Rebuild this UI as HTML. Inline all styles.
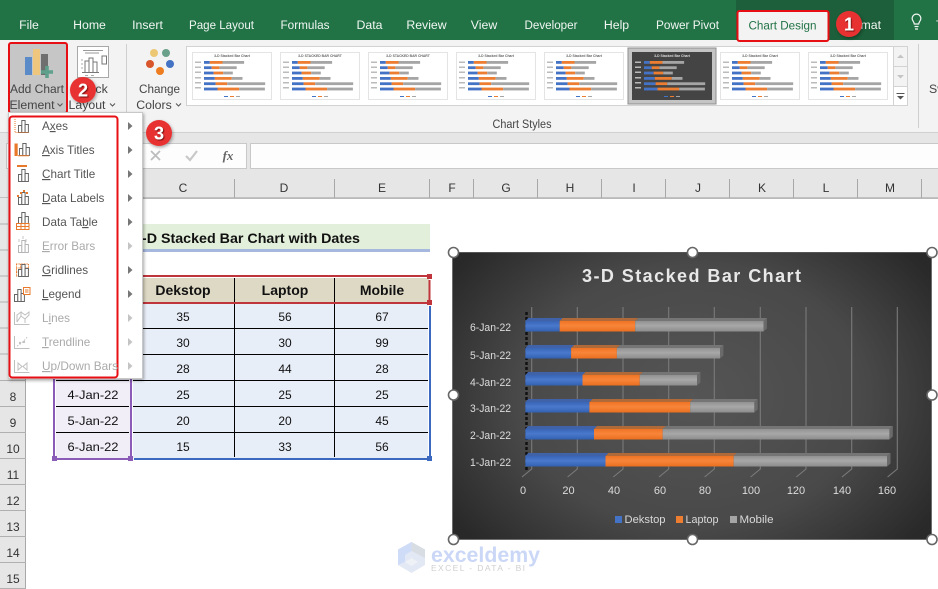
<!DOCTYPE html>
<html><head><meta charset="utf-8"><title>Add Chart Element</title>
<style>
html,body{margin:0;padding:0;background:#fff;overflow:hidden}
svg{display:block;font-family:"Liberation Sans",sans-serif}
.t{fill:#444;font-size:12px}
.tab{fill:#f1f6f3;font-size:12.3px;text-anchor:middle}
.rb{fill:#444;font-size:12.3px;text-anchor:middle}
.m{fill:#555;font-size:11.7px}
.d{fill:#aaa;font-size:11.7px}
.c{fill:#111;font-size:12px;text-anchor:middle}
.h{fill:#111;font-size:14px;font-weight:bold;text-anchor:middle}
.col{fill:#333;font-size:12px;text-anchor:middle}
.row{fill:#333;font-size:12px;text-anchor:middle}
.cat{fill:#dcdcdc;font-size:11px;text-anchor:end}
.val{fill:#dcdcdc;font-size:11px;text-anchor:middle}
.leg{fill:#d9d9d9;font-size:11px}
.badge{fill:#fff;font-size:18px;font-weight:bold;text-anchor:middle;paint-order:normal}
.th{font-size:3.4px;font-weight:bold;fill:#666;text-anchor:middle}
</style></head><body>
<svg width="938" height="589" viewBox="0 0 938 589" xmlns="http://www.w3.org/2000/svg">
<defs>
<radialGradient id="bg" cx="692" cy="396" r="290" gradientUnits="userSpaceOnUse" gradientTransform="translate(0 99) scale(1 .75)">
<stop offset="0" stop-color="#555"/><stop offset=".6" stop-color="#494949"/><stop offset="1" stop-color="#292929"/></radialGradient>
<linearGradient id="fb" x1="0" y1="0" x2="0" y2="1"><stop offset="0" stop-color="#3865b5"/><stop offset=".45" stop-color="#4a78cc"/><stop offset="1" stop-color="#3361b2"/></linearGradient>
<linearGradient id="fo" x1="0" y1="0" x2="0" y2="1"><stop offset="0" stop-color="#ef7424"/><stop offset=".45" stop-color="#f8853a"/><stop offset="1" stop-color="#e96f20"/></linearGradient>
<linearGradient id="fg" x1="0" y1="0" x2="0" y2="1"><stop offset="0" stop-color="#929292"/><stop offset=".45" stop-color="#a8a8a8"/><stop offset="1" stop-color="#8c8c8c"/></linearGradient>
<filter id="sh" x="-30%" y="-30%" width="160%" height="160%"><feDropShadow dx="1" dy="1.5" stdDeviation="1.5" flood-color="#000" flood-opacity=".35"/></filter>
<filter id="ts" x="-30%" y="-30%" width="160%" height="160%"><feDropShadow dx="1" dy="1" stdDeviation=".4" flood-color="#5a0000" flood-opacity=".8"/></filter>
<g id="tb">
<g fill="#bbb"><rect x="3" y="9.5" width="6" height="1.5"/><rect x="3" y="14.5" width="6" height="1.5"/><rect x="3" y="19.5" width="6" height="1.5"/><rect x="3" y="25" width="6" height="1.5"/><rect x="3" y="30" width="6" height="1.5"/><rect x="3" y="35" width="6" height="1.5"/></g>
<g fill="#4472c4"><rect x="12" y="9" width="5.8" height="2.8"/><rect x="12" y="14.3" width="7.7" height="2.8"/><rect x="12" y="19.6" width="9.6" height="2.8"/><rect x="12" y="25" width="10.8" height="2.8"/><rect x="12" y="30.3" width="11.6" height="2.8"/><rect x="12" y="35.6" width="13.5" height="2.8"/></g>
<g fill="#ed7d31"><rect x="17.8" y="9" width="12.7" height="2.8"/><rect x="19.7" y="14.3" width="7.7" height="2.8"/><rect x="21.6" y="19.6" width="9.6" height="2.8"/><rect x="22.8" y="25" width="16.9" height="2.8"/><rect x="23.6" y="30.3" width="11.6" height="2.8"/><rect x="25.5" y="35.6" width="21.6" height="2.8"/></g>
<g fill="#a5a5a5"><rect x="30.5" y="9" width="21.6" height="2.8"/><rect x="27.4" y="14.3" width="17.3" height="2.8"/><rect x="31.2" y="19.6" width="9.6" height="2.8"/><rect x="39.7" y="25" width="10.8" height="2.8"/><rect x="35.2" y="30.3" width="38" height="2.8"/><rect x="47.1" y="35.6" width="25.8" height="2.8"/></g>
<rect x="32" y="44" width="4" height="1" fill="#4472c4"/><rect x="38" y="44" width="4" height="1" fill="#ed7d31"/><rect x="44" y="44" width="4" height="1" fill="#a5a5a5"/>
</g>
<g id="bars" fill="#fff" stroke="#666" stroke-width="1"><rect x="18.5" y="125.5" width="3.3" height="7"/><rect x="21.8" y="120.5" width="3.3" height="12"/><rect x="25.100" y="124.5" width="3.3" height="8"/></g>
<g id="barsL" fill="#fff" stroke="#b5b5b5" stroke-width="1"><rect x="18.5" y="125.5" width="3.3" height="7"/><rect x="21.8" y="120.5" width="3.3" height="12"/><rect x="25.100" y="124.5" width="3.3" height="8"/></g>
</defs>

<!-- base -->
<rect width="938" height="589" fill="#fff"/>
<rect width="938" height="40" fill="#217346"/>
<rect x="736" y="0" width="158" height="40" fill="#1d5f3a"/>
<rect y="40" width="938" height="92" fill="#f3f3f3"/>
<rect y="132" width="938" height="1" fill="#d0d0d0"/>
<rect y="133" width="938" height="65" fill="#e6e6e6"/>
<rect y="197.5" width="938" height="1.2" fill="#9c9c9c"/>

<!-- tabs -->
<text class="tab" x="29" y="29">File</text>
<text class="tab" x="89.500" y="29">Home</text>
<text class="tab" x="147.500" y="29">Insert</text>
<text class="tab" x="221.500" y="29" textLength="65" lengthAdjust="spacingAndGlyphs">Page Layout</text>
<text class="tab" x="305" y="29" textLength="49" lengthAdjust="spacingAndGlyphs">Formulas</text>
<text class="tab" x="369.500" y="29">Data</text>
<text class="tab" x="426.500" y="29">Review</text>
<text class="tab" x="484" y="29">View</text>
<text class="tab" x="551" y="29" textLength="53" lengthAdjust="spacingAndGlyphs">Developer</text>
<text class="tab" x="616.500" y="29">Help</text>
<text class="tab" x="687.500" y="29" textLength="63" lengthAdjust="spacingAndGlyphs">Power Pivot</text>
<text class="tab" x="881" y="29" style="text-anchor:end">Format</text>
<rect x="737.500" y="11" width="91" height="30" rx="2" fill="#f3f3f3" stroke="#e80f14" stroke-width="2"/>
<text class="tab" x="782.500" y="29.500" style="fill:#217346" textLength="68" lengthAdjust="spacingAndGlyphs">Chart Design</text>
<path d="M912.500 23a4.300 4.300 0 1 1 8 0c-.6 1.300-1.600 2.200-1.800 4h-4.400c-.2-1.800-1.200-2.700-1.800-4zM914.500 29.500h4M915 32h3" transform="translate(0 -3)" fill="none" stroke="#f1f6f3" stroke-width="1.200"/>
<text class="tab" x="936" y="29" style="text-anchor:start">T</text>

<!-- ribbon: add chart -->
<rect x="9" y="43" width="58" height="70" rx="2" fill="#c6c6c6" stroke="#e80f14" stroke-width="2"/>
<rect x="25" y="57" width="7" height="18" fill="#5b8ac9"/>
<rect x="33" y="49" width="7" height="26" fill="#eec67e"/>
<rect x="41" y="54" width="7" height="21" fill="#6f6f6f"/>
<path d="M47 66v12M41 72h12" stroke="#5fa08c" stroke-width="3.600"/>
<text class="rb" x="37" y="93" textLength="54" lengthAdjust="spacingAndGlyphs">Add Chart</text>
<text class="rb" x="32" y="109">Element</text>
<path d="M57.500 103.500l2.500 2.500 2.500-2.500" fill="none" stroke="#555"/>

<!-- quick layout -->
<rect x="77.500" y="46.500" width="31" height="31" fill="#fff" stroke="#a8a8a8"/>
<path d="M83 50.500h20M85 53h14" stroke="#9a9a9a"/>
<path d="M85 72.500V61h4v11.500M89 72.500V58h4v14.500M93 72.500V62h4v10.500M82 72.500h17" fill="none" stroke="#777"/>
<rect x="102" y="56" width="4.500" height="8" fill="#fff" stroke="#777"/>
<path d="M81 60h2M81 64h2M81 68h2M85 75.500h3M91 75.500h3" stroke="#aaa"/>
<text class="rb" x="92" y="93">Quick</text>
<text class="rb" x="87" y="109">Layout</text>
<path d="M110 103.500l2.500 2.500 2.500-2.500" fill="none" stroke="#555"/>
<rect x="126" y="44" width="1" height="84" fill="#cfcfcf"/>

<!-- change colors -->
<circle cx="154" cy="53" r="4" fill="#edc874"/>
<circle cx="166" cy="53" r="4" fill="#6ba08a"/>
<circle cx="150" cy="64" r="4" fill="#d9552b"/>
<circle cx="170" cy="64" r="4" fill="#4472c4"/>
<circle cx="160" cy="71" r="4" fill="#ee7d22"/>
<text class="rb" x="159.500" y="93" textLength="41" lengthAdjust="spacingAndGlyphs">Change</text>
<text class="rb" x="154" y="109">Colors</text>
<path d="M176 103.500l2.500 2.500 2.500-2.500" fill="none" stroke="#555"/>

<!-- gallery -->
<rect x="186.500" y="46.500" width="721" height="59" fill="#fff" stroke="#d2d2d2"/>
<g fill="#fff" stroke="#e4e4e4">
<rect x="192.500" y="52.500" width="79" height="47"/><rect x="280.500" y="52.500" width="79" height="47"/><rect x="368.500" y="52.500" width="79" height="47"/><rect x="456.500" y="52.500" width="79" height="47"/><rect x="544.500" y="52.500" width="79" height="47"/><rect x="720.500" y="52.500" width="79" height="47"/><rect x="808.500" y="52.500" width="79" height="47"/>
</g>
<rect x="628" y="48" width="88" height="56" fill="#c4c4c4" stroke="#8e8e8e"/>
<rect x="632" y="52" width="80" height="48" fill="#444"/>
<use href="#tb" x="192" y="52"/><use href="#tb" x="280" y="52"/><use href="#tb" x="368" y="52"/><use href="#tb" x="456" y="52"/><use href="#tb" x="544" y="52"/><use href="#tb" x="632" y="52"/><use href="#tb" x="720" y="52"/><use href="#tb" x="808" y="52"/>
<text class="th" x="232" y="57">3-D Stacked Bar Chart</text>
<text class="th" x="320" y="57">3-D STACKED BAR CHART</text>
<text class="th" x="408" y="57">3-D STACKED BAR CHART</text>
<text class="th" x="496" y="57">3-D Stacked Bar Chart</text>
<text class="th" x="584" y="57">3-D Stacked Bar Chart</text>
<text class="th" x="672" y="57" style="fill:#ddd">3-D Stacked Bar Chart</text>
<text class="th" x="760" y="57">3-D Stacked Bar Chart</text>
<text class="th" x="848" y="57">3-D Stacked Bar Chart</text>
<rect x="893.500" y="46.500" width="14" height="59" fill="#f3f3f3" stroke="#d2d2d2"/>
<rect x="893.500" y="86.500" width="14" height="19" fill="#fff" stroke="#d2d2d2"/>
<path d="M893.500 66.500h14" stroke="#d2d2d2"/>
<path d="M897 58l3.500-3.500 3.500 3.500zM897 75l3.500 3.500 3.500-3.500z" fill="#c4c4c4"/>
<path d="M896.500 93.500h8" stroke="#555"/><path d="M897 96l3.500 3.500 3.500-3.500z" fill="#555"/>
<text class="rb" x="522" y="128" textLength="59" lengthAdjust="spacingAndGlyphs">Chart Styles</text>
<rect x="918" y="44" width="1" height="84" fill="#cfcfcf"/>
<text class="rb" x="929" y="93" style="text-anchor:start">Sw</text>

<!-- formula bar -->
<rect x="6.500" y="143.500" width="240" height="25" fill="#fdfdfd" stroke="#c8c8c8"/>
<rect x="250.500" y="143.500" width="700" height="25" fill="#fdfdfd" stroke="#c8c8c8"/>
<path d="M151 151l9 9M160 151l-9 9" stroke="#bdbdbd" stroke-width="1.800"/>
<path d="M186 156l4 4 7-9" fill="none" stroke="#c8c8c8" stroke-width="2.200"/>
<text x="228" y="160" text-anchor="middle" style="font-family:'Liberation Serif',serif;font-style:italic;font-weight:bold;font-size:13px;fill:#666">fx</text>

<!-- col headers -->
<g stroke="#a8a8a8"><path d="M234.500 179v19M334.500 179v19M429.500 179v19M473.500 179v19M537.500 179v19M601.500 179v19M665.500 179v19M729.500 179v19M793.500 179v19M857.500 179v19M921.500 179v19"/></g>
<text class="col" x="183" y="192">C</text><text class="col" x="284" y="192">D</text><text class="col" x="382" y="192">E</text><text class="col" x="452" y="192">F</text><text class="col" x="506" y="192">G</text><text class="col" x="570" y="192">H</text><text class="col" x="634" y="192">I</text><text class="col" x="698" y="192">J</text><text class="col" x="762" y="192">K</text><text class="col" x="826" y="192">L</text><text class="col" x="890" y="192">M</text>

<!-- row headers -->
<rect x="0" y="198" width="26" height="391" fill="#e6e6e6"/>
<path d="M25.500 198v391" stroke="#a8a8a8"/>
<g stroke="#b0b0b0"><path d="M0 224h26M0 250h26M0 276h26M0 302h26M0 328h26M0 354h26M0 380.500h26M0 406.500h26M0 432.500h26M0 458.500h26M0 484.500h26M0 510.500h26M0 536.500h26M0 562.500h26M0 588.500h26"/></g>
<text class="row" x="13" y="401">8</text><text class="row" x="13" y="427">9</text><text class="row" x="13" y="453">10</text><text class="row" x="13" y="479">11</text><text class="row" x="13" y="505">12</text><text class="row" x="13" y="531">13</text><text class="row" x="13" y="557">14</text><text class="row" x="13" y="583">15</text>

<!-- sheet title -->
<rect x="56" y="224" width="374" height="25" fill="#e2efda"/>
<rect x="56" y="249" width="374" height="3" fill="#a6b8de"/>
<text x="360" y="243" text-anchor="end" style="font-size:14px;font-weight:bold;fill:#111" textLength="226" lengthAdjust="spacingAndGlyphs">3-D Stacked Bar Chart with Dates</text>

<!-- table -->
<rect x="56" y="278" width="373" height="24" fill="#ddd9c4"/>
<rect x="133" y="304" width="295" height="154" fill="#e8eef8"/>
<rect x="56" y="304" width="74" height="154" fill="#f1eef8"/>
<g stroke="#000" stroke-width="1">
<path d="M234.500 278v24M334.500 278v24M234.500 304v153M334.500 304v153"/>
<path d="M133 328.500h295M133 354.500h295M133 380.500h295M133 406.500h295M133 432.500h295"/>
<path d="M56 328.500h73M56 354.500h73M56 380.500h73M56 406.500h73M56 432.500h73"/>
</g>
<text class="h" x="183" y="295">Dekstop</text><text class="h" x="285" y="295">Laptop</text><text class="h" x="382" y="295">Mobile</text>
<text class="c" x="183" y="321">35</text><text class="c" x="285" y="321">56</text><text class="c" x="382" y="321">67</text>
<text class="c" x="183" y="347">30</text><text class="c" x="285" y="347">30</text><text class="c" x="382" y="347">99</text>
<text class="c" x="183" y="373">28</text><text class="c" x="285" y="373">44</text><text class="c" x="382" y="373">28</text>
<text class="c" x="93" y="399" textLength="51" lengthAdjust="spacingAndGlyphs">4-Jan-22</text><text class="c" x="183" y="399">25</text><text class="c" x="285" y="399">25</text><text class="c" x="382" y="399">25</text>
<text class="c" x="93" y="425" textLength="51" lengthAdjust="spacingAndGlyphs">5-Jan-22</text><text class="c" x="183" y="425">20</text><text class="c" x="285" y="425">20</text><text class="c" x="382" y="425">45</text>
<text class="c" x="93" y="451" textLength="51" lengthAdjust="spacingAndGlyphs">6-Jan-22</text><text class="c" x="183" y="451">15</text><text class="c" x="285" y="451">33</text><text class="c" x="382" y="451">56</text>
<!-- range selectors -->
<path d="M56 276h373M56 303h373" stroke="#c0343c" stroke-width="2"/>
<path d="M429.500 280v20" stroke="#c0343c" stroke-width="2"/>
<rect x="427" y="274" width="5" height="5" fill="#c0343c"/><rect x="427" y="300" width="5" height="5" fill="#c0343c"/>
<path d="M430 306v152M134 459h294" stroke="#3b69c0" stroke-width="2"/>
<rect x="427" y="456" width="5" height="5" fill="#3b69c0"/>
<path d="M54 304v153M131 304v153M57 459h71" stroke="#8a5cb8" stroke-width="2"/>
<rect x="52" y="456" width="5" height="5" fill="#8a5cb8"/><rect x="128" y="456" width="5" height="5" fill="#8a5cb8"/>

<!-- chart -->
<rect x="452" y="252" width="480" height="288" fill="url(#bg)"/>
<rect x="452.500" y="252.500" width="479" height="287" fill="none" stroke="#6d6d6d"/>
<path d="M452 252.500h480" stroke="#555"/>
<text x="691.500" y="282" text-anchor="middle" textLength="219" style="font-size:18px;font-weight:bold;fill:#e8e8e8">3-D Stacked Bar Chart</text>
<g stroke="#7a7a7a" stroke-width="1.100" fill="none">
<path d="M531.700 307v162l-9.700 8M577.300 307v162l-9.700 8M623 307v162l-9.700 8M668.700 307v162l-9.700 8M714.300 307v162l-9.700 8M760.300 307v162l-9.700 8M806 307v162l-9.700 8M851.700 307v162l-9.700 8M897.300 307v162l-9.700 8"/>
</g>
<path d="M526.500 312v158" stroke="#111" stroke-width="2.500" stroke-dasharray="3 2"/>
<!-- bars rows -->
<g>
<polygon points="525.3,321 528.300,318 562.700,318 559.700,321" fill="#3f62a8"/><polygon points="559.700,321 562.700,318 638.200,318 635.200,321" fill="#b06a3a"/><polygon points="635.200,321 638.200,318 766.900,318 763.500,321" fill="#757575"/>
<polygon points="763.500,321 766.900,318 766.900,328.500 763.500,331.500" fill="#6a6a6a"/>
<rect x="525.300" y="321" width="34.400" height="10.500" fill="url(#fb)"/><rect x="559.700" y="321" width="75.500" height="10.500" fill="url(#fo)"/><rect x="635.200" y="321" width="128.300" height="10.500" fill="url(#fg)"/>
</g>
<g>
<polygon points="525.300,348 528.300,345 574.100,345 571.100,348" fill="#3f62a8"/><polygon points="571.100,348 574.100,345 619.900,345 616.900,348" fill="#b06a3a"/><polygon points="616.900,348 619.900,345 723.400,345 720,348" fill="#757575"/>
<polygon points="720,348 723.400,345 723.400,355.500 720,358.500" fill="#6a6a6a"/>
<rect x="525.300" y="348" width="45.800" height="10.500" fill="url(#fb)"/><rect x="571.100" y="348" width="45.800" height="10.500" fill="url(#fo)"/><rect x="616.900" y="348" width="103.100" height="10.500" fill="url(#fg)"/>
</g>
<g>
<polygon points="525.300,375 528.300,372 585.500,372 582.500,375" fill="#3f62a8"/><polygon points="582.500,375 585.500,372 642.800,372 639.800,375" fill="#b06a3a"/><polygon points="639.800,375 642.800,372 700.400,372 697,375" fill="#757575"/>
<polygon points="697,375 700.400,372 700.400,382.500 697,385.500" fill="#6a6a6a"/>
<rect x="525.300" y="375" width="57.200" height="10.500" fill="url(#fb)"/><rect x="582.500" y="375" width="57.300" height="10.500" fill="url(#fo)"/><rect x="639.800" y="375" width="57.200" height="10.500" fill="url(#fg)"/>
</g>
<g>
<polygon points="525.300,402 528.300,399 592.400,399 589.400,402" fill="#3f62a8"/><polygon points="589.400,402 592.400,399 693.200,399 690.200,402" fill="#b06a3a"/><polygon points="690.200,402 693.200,399 757.700,399 754.300,402" fill="#757575"/>
<polygon points="754.300,402 757.700,399 757.700,409.500 754.300,412.500" fill="#6a6a6a"/>
<rect x="525.300" y="402" width="64.100" height="10.500" fill="url(#fb)"/><rect x="589.400" y="402" width="100.800" height="10.500" fill="url(#fo)"/><rect x="690.200" y="402" width="64.100" height="10.500" fill="url(#fg)"/>
</g>
<g>
<polygon points="525.300,429 528.300,426 597,426 594,429" fill="#3f62a8"/><polygon points="594,429 597,426 665.700,426 662.700,429" fill="#b06a3a"/><polygon points="662.700,429 665.700,426 892.800,426 889.400,429" fill="#757575"/>
<polygon points="889.400,429 892.800,426 892.800,436.500 889.400,439.500" fill="#6a6a6a"/>
<rect x="525.300" y="429" width="68.700" height="10.500" fill="url(#fb)"/><rect x="594" y="429" width="68.700" height="10.500" fill="url(#fo)"/><rect x="662.700" y="429" width="226.700" height="10.500" fill="url(#fg)"/>
</g>
<g>
<polygon points="525.300,456 528.300,453 608.500,453 605.500,456" fill="#3f62a8"/><polygon points="605.500,456 608.500,453 736.700,453 733.700,456" fill="#b06a3a"/><polygon points="733.700,456 736.700,453 890.500,453 887.100,456" fill="#757575"/>
<polygon points="887.100,456 890.500,453 890.500,463.500 887.100,466.500" fill="#6a6a6a"/>
<rect x="525.300" y="456" width="80.200" height="10.500" fill="url(#fb)"/><rect x="605.500" y="456" width="128.200" height="10.500" fill="url(#fo)"/><rect x="733.700" y="456" width="153.400" height="10.500" fill="url(#fg)"/>
</g>
<text class="cat" x="511" y="331" textLength="41" lengthAdjust="spacingAndGlyphs">6-Jan-22</text>
<text class="cat" x="511" y="359" textLength="41" lengthAdjust="spacingAndGlyphs">5-Jan-22</text>
<text class="cat" x="511" y="386" textLength="41" lengthAdjust="spacingAndGlyphs">4-Jan-22</text>
<text class="cat" x="511" y="412" textLength="41" lengthAdjust="spacingAndGlyphs">3-Jan-22</text>
<text class="cat" x="511" y="439" textLength="41" lengthAdjust="spacingAndGlyphs">2-Jan-22</text>
<text class="cat" x="511" y="466" textLength="41" lengthAdjust="spacingAndGlyphs">1-Jan-22</text>
<text class="val" x="523" y="494">0</text><text class="val" x="568.500" y="494">20</text><text class="val" x="614" y="494">40</text><text class="val" x="660" y="494">60</text><text class="val" x="705" y="494">80</text><text class="val" x="751" y="494">100</text><text class="val" x="796" y="494">120</text><text class="val" x="842" y="494">140</text><text class="val" x="887" y="494">160</text>
<rect x="615" y="516" width="7" height="7" fill="#4472c4"/><text class="leg" x="624.500" y="523" textLength="41" lengthAdjust="spacingAndGlyphs">Dekstop</text>
<rect x="676" y="516" width="7" height="7" fill="#ed7d31"/><text class="leg" x="685.500" y="523" textLength="33" lengthAdjust="spacingAndGlyphs">Laptop</text>
<rect x="730" y="516" width="7" height="7" fill="#a5a5a5"/><text class="leg" x="739.500" y="523" textLength="34" lengthAdjust="spacingAndGlyphs">Mobile</text>
<!-- chart handles -->
<g fill="#fff" stroke="#666" stroke-width="1.600">
<circle cx="453.500" cy="252.500" r="5"/><circle cx="692.500" cy="252.500" r="5"/><circle cx="932" cy="252.500" r="5"/><circle cx="453.500" cy="395" r="5"/><circle cx="932" cy="395" r="5"/><circle cx="453.500" cy="539.500" r="5"/><circle cx="692.500" cy="539.500" r="5"/><circle cx="932" cy="539.500" r="5"/>
</g>

<!-- watermark -->
<polygon points="411.500,542 425,549.500 425,565 411.500,573 398,565 398,549.500" fill="#e3e8f5"/>
<polygon points="411.500,542 425,549.500 425,558 411.500,551" fill="#d8dde4"/>
<polygon points="398,549.500 411.500,542 411.500,551 405,555 405,562 398,565" fill="#cfdcf8"/>
<polygon points="405,562 411.500,558 418,562 411.500,566" fill="#eef1f6"/>
<text x="431" y="562" style="font-size:21.500px;font-weight:bold;fill:#cbd7f6" textLength="109" lengthAdjust="spacingAndGlyphs">exceldemy</text>
<text x="431" y="571" style="font-size:8.500px;fill:#d0d0d0" textLength="94">EXCEL - DATA - BI</text>

<!-- dropdown menu -->
<rect x="8.500" y="112.500" width="134" height="266" fill="#fff" stroke="#c8c8c8" filter="url(#sh)"/>
<rect x="9.500" y="116.500" width="108" height="261" rx="3" fill="none" stroke="#e80f14" stroke-width="2"/>

<!-- menu icons -->
<g><use href="#bars"/><path d="M15 119v13.500h14" fill="none" stroke="#e8792a" stroke-dasharray="1 1"/></g>
<g transform="translate(0 24)"><use href="#bars" transform="translate(1 -1)"/><path d="M15 120h2.200v11.500H15z M18 131.800h11" fill="#e8792a" stroke="#e8792a"/></g>
<g transform="translate(0 48)"><use href="#bars" transform="translate(0 1)"/><path d="M17 118h10" stroke="#e8792a" stroke-width="2"/></g>
<g transform="translate(0 72)"><use href="#bars"/><path d="M20 122h2v-2h-2zM23 118h2v2h-2zM26 122h2v-2h-2zM17 125h2v-2h-2z" fill="#e8792a"/></g>
<g transform="translate(0 96)"><use href="#bars" transform="translate(0 -4)"/><path d="M16.500 127.500h12.500v6h-12.500zM16.500 130.500h12.500M21 127.500v6M25 127.500v6" fill="#fff" stroke="#e8792a"/></g>
<g transform="translate(0 120)"><use href="#barsL"/><path d="M19 122v-3M23 119v-3M26 122v-3" stroke="#c4c4c4"/></g>
<g transform="translate(0 144)"><path d="M16 120h12M16 124h12M16 128h12M16 132h12M16.500 120v12M20.500 120v12M24.500 120v12M28.500 120v12" stroke="#e8792a" stroke-dasharray="1 .6"/><use href="#bars"/></g>
<g transform="translate(0 168)"><use href="#bars" transform="translate(-4 1)"/><rect x="23.500" y="119.500" width="6.500" height="7" fill="#fff" stroke="#e8792a"/><path d="M25 122h3.500M25 124h3.500" stroke="#e8792a"/></g>
<g transform="translate(0 192)" fill="none" stroke="#c0c0c0"><path d="M14.500 120v12.500h15"/><path d="M17 130l4-6v-4l-4 3v7M21 124l4 3 4-4v-3l-4 3-4-3M25 127v4"/></g>
<g transform="translate(0 216)" fill="none" stroke="#c0c0c0"><path d="M14.500 120v12.500h15"/><path d="M17 130c4-2 7-5 11-10" stroke-dasharray="1.500 1.500"/><circle cx="20" cy="127" r=".7"/><circle cx="24" cy="126" r=".7"/></g>
<g transform="translate(0 240)" fill="none" stroke="#c0c0c0"><path d="M14.500 120v12.500h15"/><path d="M18 123v7l4-3.500zM27 123v7l-4-3.500z"/></g>

<!-- menu text -->
<text class="m" x="42" y="130">A<tspan text-decoration="underline">x</tspan>es</text>
<text class="m" x="42" y="154"><tspan text-decoration="underline">A</tspan>xis Titles</text>
<text class="m" x="42" y="178"><tspan text-decoration="underline">C</tspan>hart Title</text>
<text class="m" x="42" y="202"><tspan text-decoration="underline">D</tspan>ata Labels</text>
<text class="m" x="42" y="226">Data Ta<tspan text-decoration="underline">b</tspan>le</text>
<text class="d" x="42" y="250"><tspan text-decoration="underline">E</tspan>rror Bars</text>
<text class="m" x="42" y="274"><tspan text-decoration="underline">G</tspan>ridlines</text>
<text class="m" x="42" y="298"><tspan text-decoration="underline">L</tspan>egend</text>
<text class="d" x="42" y="322">L<tspan text-decoration="underline">i</tspan>nes</text>
<text class="d" x="42" y="346"><tspan text-decoration="underline">T</tspan>rendline</text>
<text class="d" x="42" y="370" textLength="76" lengthAdjust="spacingAndGlyphs"><tspan text-decoration="underline">U</tspan>p/Down Bars</text>
<g fill="#777"><path d="M128 122v8l4.500-4zM128 146v8l4.500-4zM128 170v8l4.500-4zM128 194v8l4.500-4zM128 218v8l4.500-4zM128 266v8l4.500-4zM128 290v8l4.500-4z"/></g>
<g fill="#c4c4c4"><path d="M128 242v8l4.500-4zM128 314v8l4.500-4zM128 338v8l4.500-4zM128 362v8l4.500-4z"/></g>

<!-- badges -->
<g filter="url(#sh)"><circle cx="849" cy="24" r="13" fill="#e83232"/></g>
<text class="badge" x="849" y="30.500" filter="url(#ts)">1</text>
<g filter="url(#sh)"><circle cx="83" cy="90" r="13" fill="#e83232"/></g>
<text class="badge" x="83" y="96.500" filter="url(#ts)">2</text>
<g filter="url(#sh)"><circle cx="159" cy="133" r="13" fill="#e83232"/></g>
<text class="badge" x="159" y="139.500" filter="url(#ts)">3</text>
</svg>
</body></html>
